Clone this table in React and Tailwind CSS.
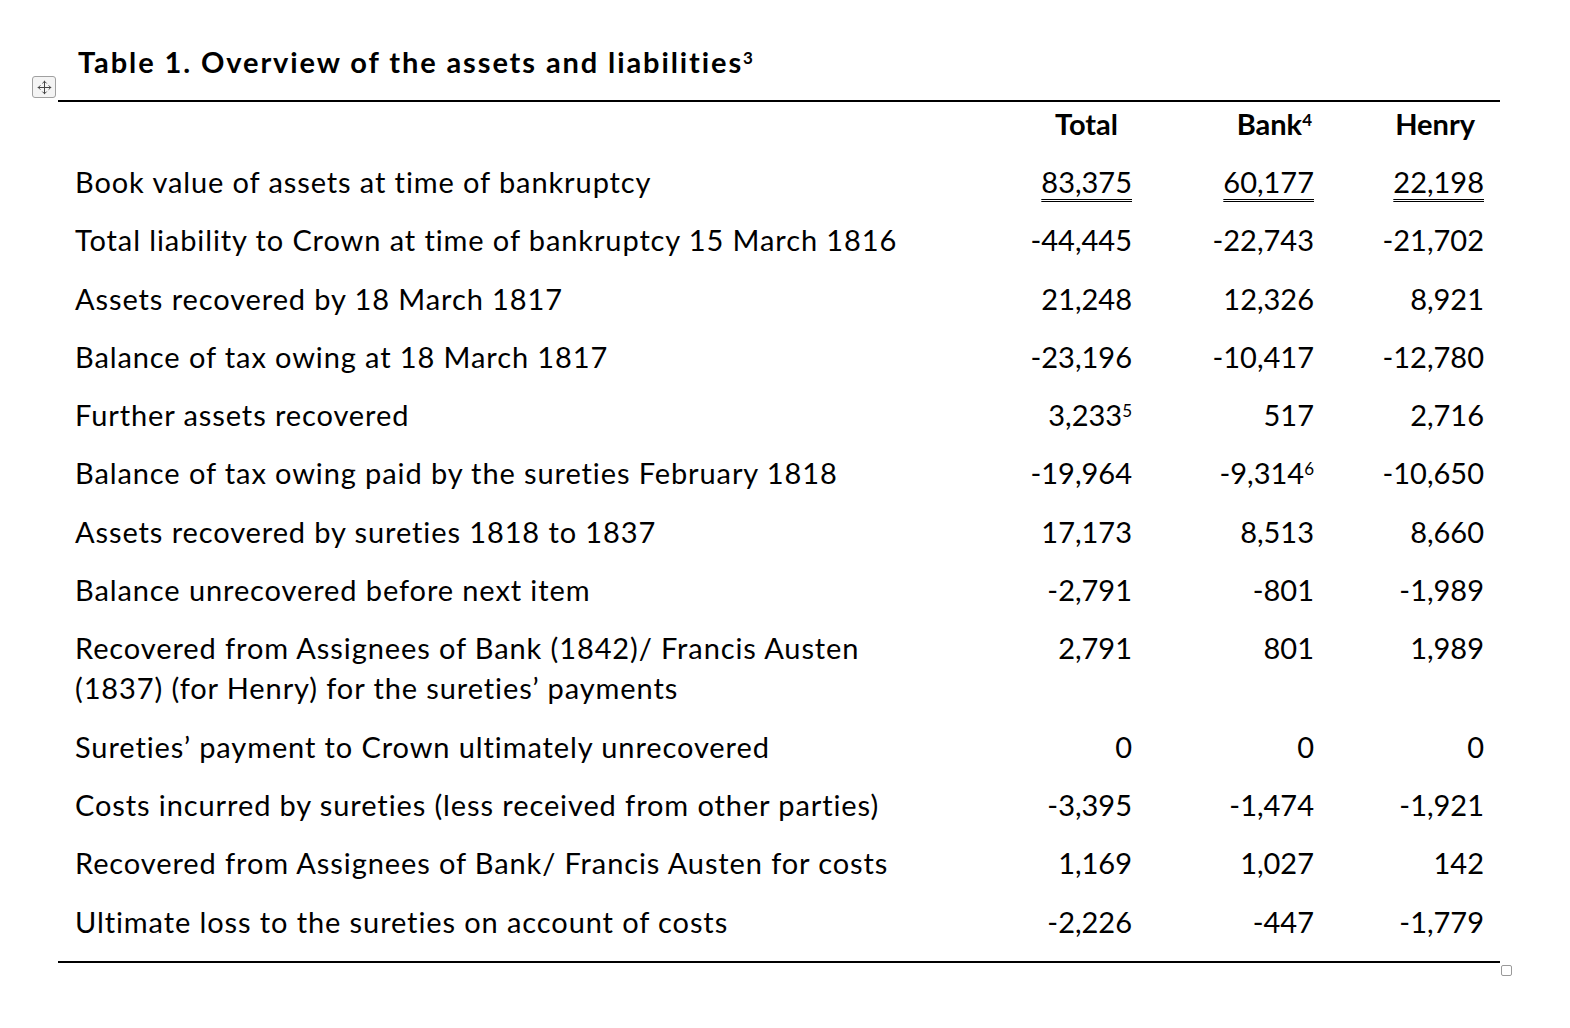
import { Move } from "lucide-react";

const rows = [
  ["Book value of assets at time of bankruptcy", "83,375", "60,177", "22,198", true],
  ["Total liability to Crown at time of bankruptcy 15 March 1816", "-44,445", "-22,743", "-21,702"],
  ["Assets recovered by 18 March 1817", "21,248", "12,326", "8,921"],
  ["Balance of tax owing at 18 March 1817", "-23,196", "-10,417", "-12,780"],
  ["Further assets recovered", ["3,233", "5"], "517", "2,716"],
  ["Balance of tax owing paid by the sureties February 1818", "-19,964", ["-9,314", "6"], "-10,650"],
  ["Assets recovered by sureties 1818 to 1837", "17,173", "8,513", "8,660"],
  ["Balance unrecovered before next item", "-2,791", "-801", "-1,989"],
  [
    "Recovered from Assignees of Bank (1842)/ Francis Austen (1837) (for Henry) for the sureties’ payments",
    "2,791",
    "801",
    "1,989",
  ],
  ["Sureties’ payment to Crown ultimately unrecovered", "0", "0", "0"],
  ["Costs incurred by sureties (less received from other parties)", "-3,395", "-1,474", "-1,921"],
  ["Recovered from Assignees of Bank/ Francis Austen for costs", "1,169", "1,027", "142"],
  ["Ultimate loss to the sureties on account of costs", "-2,226", "-447", "-1,779"],
];

function Num({ v, dbl }) {
  if (Array.isArray(v)) {
    return (
      <span>
        {v[0]}
        <sup className="text-[17px] top-[-0.55em]">{v[1]}</sup>
      </span>
    );
  }
  return (
    <span
      className={
        dbl ? "underline decoration-double decoration-[1px] underline-offset-[6px]" : ""
      }
    >
      {v}
    </span>
  );
}

export default function App() {
  return (
    <div
      className="min-h-screen bg-white text-black pt-[42px] pl-[58px]"
      style={{ fontFamily: "Lato, 'Open Sans', sans-serif" }}
    >
      <div className="pl-[20px] h-[40px] leading-[40px] text-[29px] font-bold tracking-[1.9px]">
        Table 1. Overview of the assets and liabilities
        <sup className="text-[17px] top-[-0.55em]">3</sup>
      </div>
      <div className="relative mt-[18px] w-[1442px]">
        <div className="absolute left-[-26px] top-[-24px] w-[24px] h-[22px] border border-[#a0a0a0] rounded-[3px] bg-[#f4f4f4] flex items-center justify-center">
          <Move size={15} strokeWidth={1.6} className="text-[#444]" />
        </div>
        <div className="absolute right-[-12px] bottom-[-13px] w-[11px] h-[11px] border-[1.5px] border-[#999] rounded-[2px] bg-white" />
        <table className="w-full border-collapse border-t-2 border-b-2 border-black text-[29px] leading-[40px]">
          <colgroup>
            <col className="w-[892px]" />
            <col className="w-[198px]" />
            <col className="w-[182px]" />
            <col className="w-[170px]" />
          </colgroup>
          <thead>
            <tr className="font-bold">
              <th className="pt-[2px] pb-[9px]" />
              <th className="pt-[2px] pb-[9px] pr-[30px] text-right font-bold">Total</th>
              <th className="pt-[2px] pb-[9px] pr-[18px] text-right font-bold">
                Bank<sup className="text-[17px] top-[-0.55em]">4</sup>
              </th>
              <th className="pt-[2px] pb-[9px] pr-[25px] text-right font-bold">Henry</th>
            </tr>
          </thead>
          <tbody>
            {rows.map(([label, a, b, c, dbl], i) => (
              <tr key={i} className="align-top">
                <td
                  className={`pl-[17px] pt-[9px] ${
                    i === rows.length - 1 ? "pb-[19px]" : "pb-[9.3px]"
                  } pr-[30px] text-left font-normal tracking-[0.9px]`}
                >
                  {label}
                </td>
                <td className="pt-[9px] pb-[9.3px] pr-[16px] text-right">
                  <Num v={a} dbl={dbl} />
                </td>
                <td className="pt-[9px] pb-[9.3px] pr-[16px] text-right">
                  <Num v={b} dbl={dbl} />
                </td>
                <td className="pt-[9px] pb-[9.3px] pr-[16px] text-right">
                  <Num v={c} dbl={dbl} />
                </td>
              </tr>
            ))}
          </tbody>
        </table>
      </div>
    </div>
  );
}
